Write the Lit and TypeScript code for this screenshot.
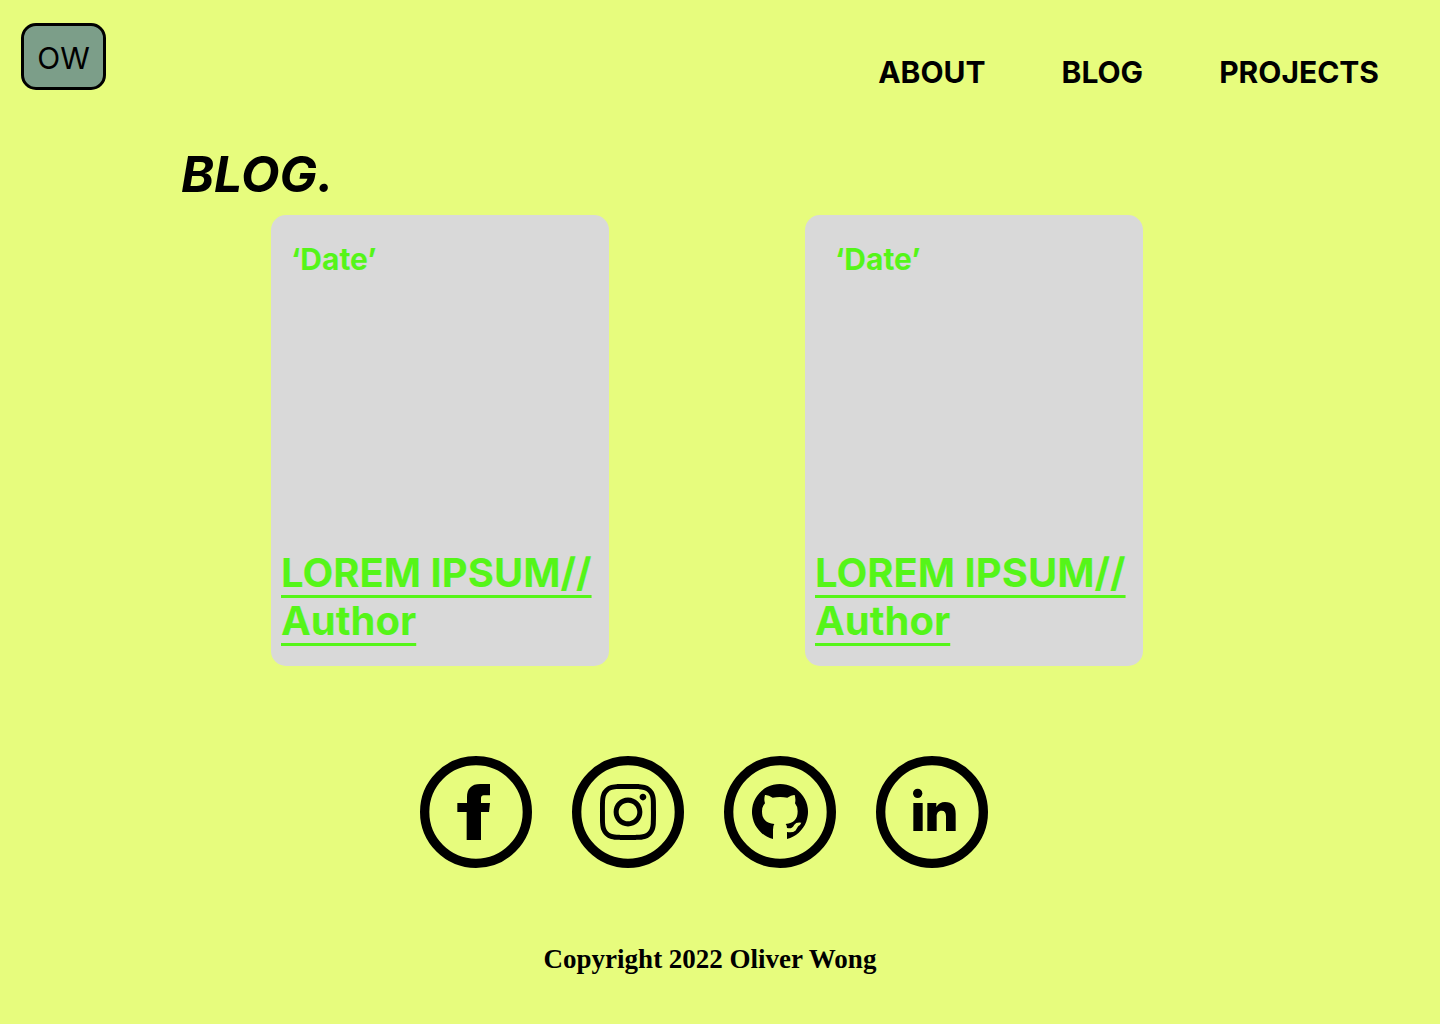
import { LitElement, html, css, svg } from "lit";
import { customElement } from "lit/decorators.js";

interface Post {
  date: string;
  title: string;
  author: string;
  inset: boolean;
}

const posts: Post[] = [
  { date: "‘Date’", title: "LOREM IPSUM//", author: "Author", inset: false },
  { date: "‘Date’", title: "LOREM IPSUM//", author: "Author", inset: true },
];

const socials = [
  {
    name: "Facebook",
    glyph: svg`<path d="M210 84h-29c-27 0-40 14-40 40v17h-29v27h28v84h43v-84h24l3-27h-27v-14c0-6 3-9 8-9h19z"/>`,
  },
  {
    name: "Instagram",
    glyph: svg`<g transform="translate(84 84) scale(7)"><path d="M12 0C8.74 0 8.333.015 7.053.072 5.775.132 4.905.333 4.14.63c-.789.306-1.459.717-2.126 1.384S.935 3.35.63 4.14C.333 4.905.131 5.775.072 7.053.012 8.333 0 8.74 0 12s.015 3.667.072 4.947c.06 1.277.261 2.148.558 2.913.306.788.717 1.459 1.384 2.126.667.666 1.336 1.079 2.126 1.384.766.296 1.636.499 2.913.558C8.333 23.988 8.74 24 12 24s3.667-.015 4.947-.072c1.277-.06 2.148-.262 2.913-.558.788-.306 1.459-.718 2.126-1.384.666-.667 1.079-1.335 1.384-2.126.296-.765.499-1.636.558-2.913.06-1.28.072-1.687.072-4.947s-.015-3.667-.072-4.947c-.06-1.277-.262-2.149-.558-2.913-.306-.789-.718-1.459-1.384-2.126C21.319 1.347 20.651.935 19.86.63c-.765-.297-1.636-.499-2.913-.558C15.667.012 15.26 0 12 0zm0 2.16c3.203 0 3.585.016 4.85.071 1.17.055 1.805.249 2.227.415.562.217.96.477 1.382.896.419.42.679.819.896 1.381.164.422.36 1.057.413 2.227.057 1.266.07 1.646.07 4.85s-.015 3.585-.074 4.85c-.061 1.17-.256 1.805-.421 2.227-.224.562-.479.96-.899 1.382-.419.419-.824.679-1.38.896-.42.164-1.065.36-2.235.413-1.274.057-1.649.07-4.859.07-3.211 0-3.586-.015-4.859-.074-1.171-.061-1.816-.256-2.236-.421-.569-.224-.96-.479-1.379-.899-.421-.419-.69-.824-.9-1.38-.165-.42-.359-1.065-.42-2.235-.045-1.26-.061-1.649-.061-4.844 0-3.196.016-3.586.061-4.861.061-1.17.255-1.814.42-2.234.21-.57.479-.96.9-1.381.419-.419.81-.689 1.379-.898.42-.166 1.051-.361 2.221-.421 1.275-.045 1.65-.06 4.859-.06zm0 3.678c-3.405 0-6.162 2.76-6.162 6.162 0 3.405 2.76 6.162 6.162 6.162 3.405 0 6.162-2.76 6.162-6.162 0-3.405-2.76-6.162-6.162-6.162zM12 16c-2.21 0-4-1.79-4-4s1.79-4 4-4 4 1.79 4 4-1.79 4-4 4zm7.846-10.405c0 .795-.646 1.44-1.44 1.44-.795 0-1.44-.646-1.44-1.44 0-.794.646-1.439 1.44-1.439.793-.001 1.44.645 1.44 1.439z"/></g>`,
  },
  {
    name: "GitHub",
    glyph: svg`<path d="M147 249A84 84 0 1 1 189 249V228Q206 231 214 224C220 218 220 210 228 207L232 200Q216 198 211 206C205 216 200 219 189 216Q189 208 185 204C209 202 221 190 221 166Q221 151 213 142Q216 130 212 117Q203 116 190 125Q168 121 146 125Q133 116 123 117Q119 130 123 142Q114 151 114 166C114 190 126 202 151 204Q147 209 147 221z"/>`,
  },
  {
    name: "LinkedIn",
    glyph: svg`<circle cx="125" cy="112" r="14"/><path d="M112 141h28v84h-28zM154 141h27v12c6-10 15-15 26-15 22 0 32 13 32 35v52h-29v-44c0-11-4-17-13-17-10 0-15 7-15 17v44h-28z"/>`,
  },
];

@customElement("app-root")
export class AppRoot extends LitElement {
  static styles = css`
    :host {
      display: block;
      min-height: 100vh;
      background: #e7fc7d;
      color: #000;
      font-family: Inter, "Liberation Sans", sans-serif;
    }
    a {
      color: inherit;
      text-decoration: none;
    }
    .header {
      display: flex;
      justify-content: space-between;
      align-items: flex-end;
      padding: 23px 61px 0 21px;
    }
    .logo {
      box-sizing: border-box;
      width: 85px;
      padding: 14px 0 11px;
      border: 3px solid #000;
      border-radius: 15px;
      background: #7c9e89;
      font-size: 30px;
      line-height: 36px;
      font-weight: 400;
      text-align: center;
    }
    .nav {
      display: flex;
      gap: 76px;
      font-size: 30px;
      line-height: 36px;
      font-weight: 700;
    }
    .title {
      margin: 54px 0 11px 181px;
      font-size: 50px;
      line-height: 60px;
      font-weight: 700;
      font-style: italic;
    }
    .posts {
      display: flex;
      justify-content: center;
      gap: 196px;
      padding-right: 26px;
    }
    .card {
      box-sizing: border-box;
      display: flex;
      flex-direction: column;
      justify-content: space-between;
      width: 338px;
      min-height: 451px;
      padding: 26px 10px 21px;
      border-radius: 15px;
      background: #d9d9d9;
      color: #55f519;
      font-weight: 700;
    }
    .date {
      padding-left: 10px;
      font-size: 30px;
      line-height: 36px;
    }
    .date-inset {
      padding-left: 20px;
    }
    .post-title {
      margin: 0;
      font-size: 40px;
      line-height: 48px;
    }
    .post-link {
      text-decoration: underline;
      text-decoration-thickness: 3px;
      text-underline-offset: 8px;
      text-decoration-skip-ink: none;
      white-space: nowrap;
    }
    .socials {
      display: flex;
      justify-content: center;
      gap: 40px;
      padding: 90px 32px 0 0;
    }
    .social {
      display: block;
      width: 112px;
      height: 112px;
    }
    .icon {
      display: block;
      width: 100%;
      height: 100%;
    }
    .ring {
      fill: none;
      stroke: #000;
      stroke-width: 28px;
    }
    .copyright {
      margin: 0;
      padding: 75px 20px 40px 0;
      font-family: "Liberation Serif", serif;
      font-size: 27px;
      line-height: 32px;
      font-weight: 700;
      text-align: center;
    }
  `;

  render() {
    return html`
      <header class="header">
        <a class="logo" href="#home">OW</a>
        <nav class="nav" aria-label="Main">
          <a href="#about">ABOUT</a>
          <a href="#blog">BLOG</a>
          <a href="#projects">PROJECTS</a>
        </nav>
      </header>
      <main>
        <h1 class="title">BLOG.</h1>
        <div class="posts">
          ${posts.map(
            (post) => html`
              <article class="card">
                <time class="date ${post.inset ? "date-inset" : ""}">${post.date}</time>
                <h2 class="post-title">
                  <a class="post-link" href="#post">${post.title}<br />${post.author}</a>
                </h2>
              </article>
            `
          )}
        </div>
      </main>
      <footer>
        <div class="socials">
          ${socials.map(
            (item) => html`
              <a class="social" href="#social" aria-label=${item.name}>
                <svg class="icon" viewBox="0 0 336 336" aria-hidden="true">
                  <circle class="ring" cx="168" cy="168" r="154" />
                  ${item.glyph}
                </svg>
              </a>
            `
          )}
        </div>
        <p class="copyright">Copyright 2022 Oliver Wong</p>
      </footer>
    `;
  }
}
